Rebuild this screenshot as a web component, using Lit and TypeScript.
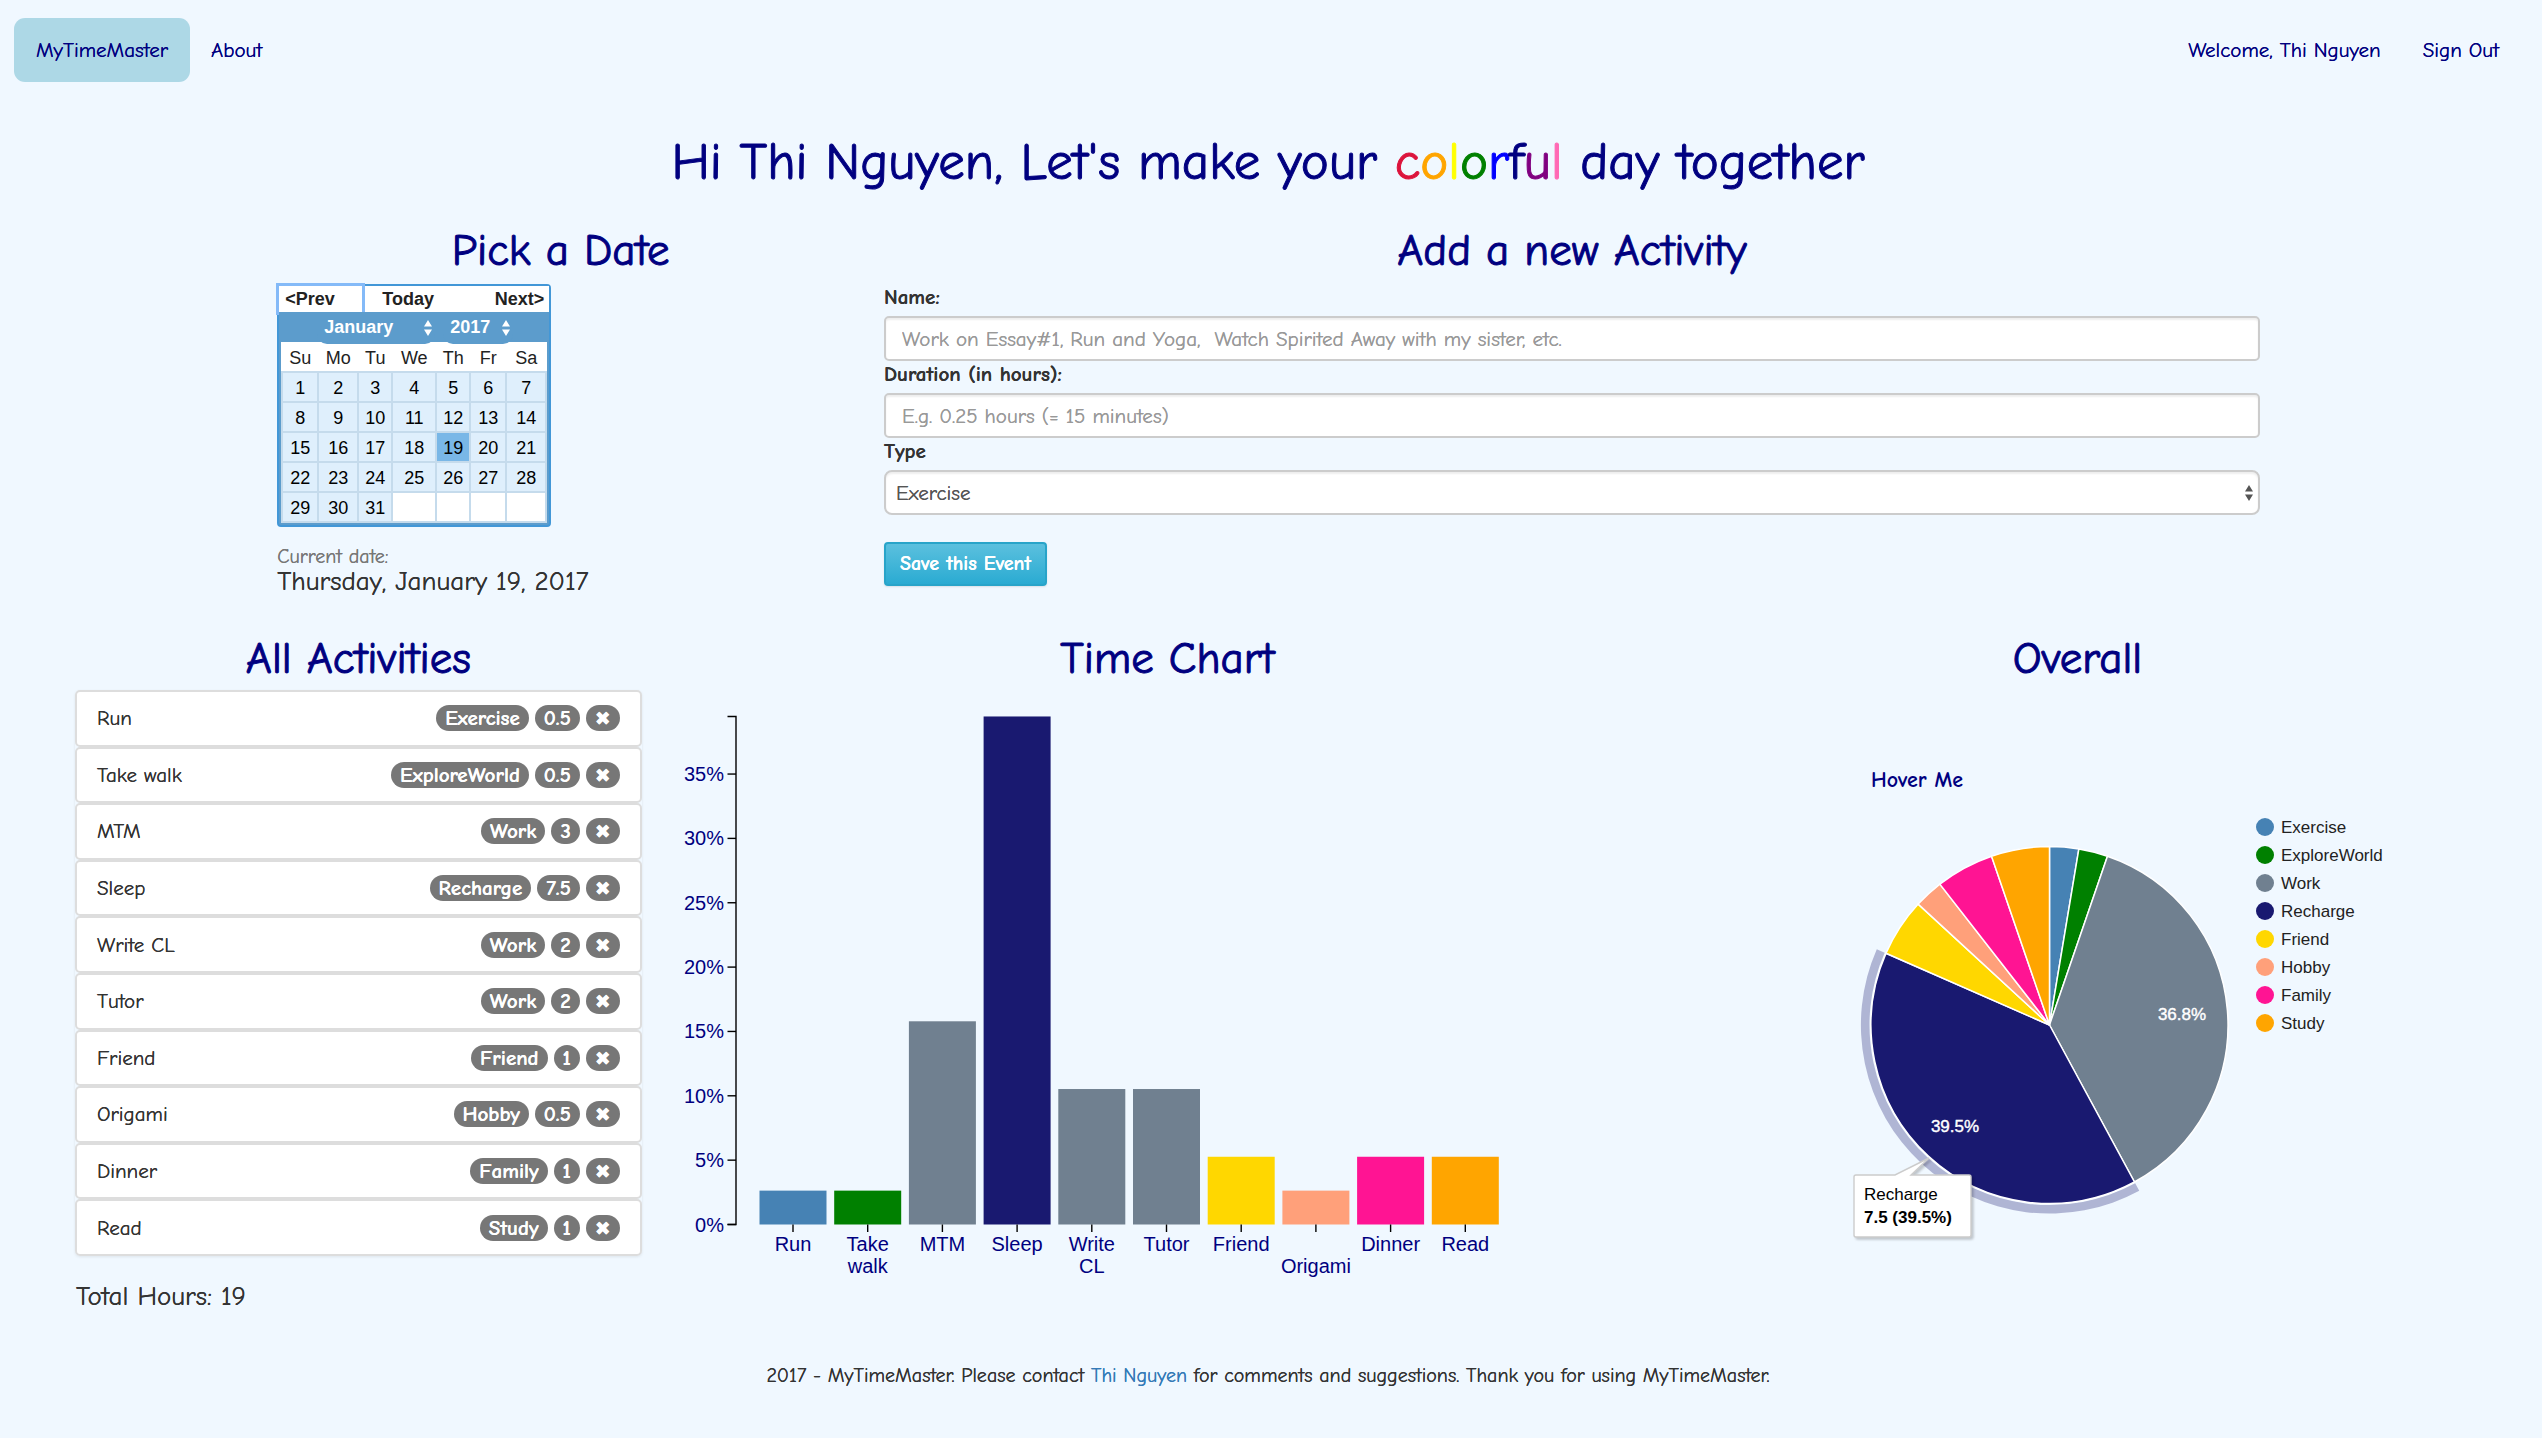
import { LitElement, html, svg, css } from "lit";
import { customElement, state } from "lit/decorators.js";
import { classMap } from "lit/directives/class-map.js";
import { styleMap } from "lit/directives/style-map.js";

interface Activity {
  name: string;
  type: string;
  hours: number;
}

const COLORS: Record<string, string> = {
  Exercise: "steelblue",
  ExploreWorld: "green",
  Work: "slategray",
  Recharge: "midnightblue",
  Friend: "gold",
  Hobby: "lightsalmon",
  Family: "deeppink",
  Study: "orange",
};

const ACTIVITIES: Activity[] = [
  { name: "Run", type: "Exercise", hours: 0.5 },
  { name: "Take walk", type: "ExploreWorld", hours: 0.5 },
  { name: "MTM", type: "Work", hours: 3 },
  { name: "Sleep", type: "Recharge", hours: 7.5 },
  { name: "Write CL", type: "Work", hours: 2 },
  { name: "Tutor", type: "Work", hours: 2 },
  { name: "Friend", type: "Friend", hours: 1 },
  { name: "Origami", type: "Hobby", hours: 0.5 },
  { name: "Dinner", type: "Family", hours: 1 },
  { name: "Read", type: "Study", hours: 1 },
];

const TOTAL = ACTIVITIES.reduce((sum, a) => sum + a.hours, 0);

const RAINBOW: [string, string][] = [
  ["c", "crimson"],
  ["o", "orange"],
  ["l", "yellow"],
  ["o", "green"],
  ["r", "blue"],
  ["f", "navy"],
  ["u", "purple"],
  ["l", "hotpink"],
];

const arrows = html`<svg class="arrows" width="8" height="16" viewBox="0 0 8 16" aria-hidden="true">
  <path d="M4 0 L8 6.5 H0 Z M4 16 L8 9.5 H0 Z" fill="currentColor" />
</svg>`;

const sharedFont = css`
  * {
    box-sizing: border-box;
  }
  button,
  input,
  select {
    font: inherit;
    margin: 0;
    text-shadow: inherit;
  }
`;

@customElement("date-picker")
class DatePicker extends LitElement {
  static styles = [
    sharedFont,
    css`
      :host {
        display: block;
        color: #222;
        font: 18px/26px "Liberation Sans", Arial, sans-serif;
      }
      .box {
        width: 274px;
        border: 2px solid #4297d7;
        border-radius: 4px;
        background: #5c9ccc;
        padding-bottom: 2px;
        text-shadow: none;
      }
      .moves {
        display: flex;
        justify-content: space-between;
        background: #fff;
        height: 26px;
      }
      .moves button {
        border: 0;
        background: #fff;
        padding: 0 5px 0 7px;
        font-weight: bold;
        color: #222;
      }
      .moves .prev {
        position: relative;
        z-index: 1;
        width: 83px;
        padding-left: 6px;
        text-align: left;
        outline: 3px solid #84baf8;
      }
      .moves .today {
        flex: 1;
        text-align: left;
        padding-left: 20px;
      }
      .head {
        position: relative;
        z-index: 2;
        background: #5c9ccc;
        display: flex;
        justify-content: center;
        gap: 8px;
        height: 30px;
        color: #fff;
        padding-left: 2px;
      }
      .pick {
        position: relative;
        display: flex;
        align-items: center;
        height: 32px;
        border-radius: 0 0 10px 10px;
        background: #5c9ccc;
      }
      .pick select {
        appearance: none;
        border: 0;
        background: none;
        color: #fff;
        font-weight: bold;
        height: 32px;
        padding: 0 0 2px 7px;
      }
      .month {
        width: 118px;
      }
      .year {
        width: 70px;
      }
      .month select,
      .year select {
        width: 100%;
      }
      .pick .arrows {
        position: absolute;
        right: 3px;
        top: 8px;
        pointer-events: none;
      }
      table {
        table-layout: fixed;
        border-collapse: collapse;
        width: 266px;
        margin: 0 2px;
        background: #fff;
      }
      th {
        height: 30px;
        padding: 2px 0 0;
        font-weight: normal;
      }
      td {
        height: 30px;
        padding: 0;
        border: 2px solid #c5dbec;
        text-align: center;
      }
      td button {
        display: block;
        width: 100%;
        height: 28px;
        border: 0;
        padding: 1px 0 0;
        background: #dfeffc;
        color: #000;
      }
      td .on {
        background: #79b7e7;
      }
      .w34 { width: 34px; }
      .w36 { width: 36px; }
      .w40 { width: 40px; }
      .w44 { width: 44px; }
    `,
  ];

  @state() private day = 19;

  render() {
    const names = ["Su", "Mo", "Tu", "We", "Th", "Fr", "Sa"];
    const widths = [36, 40, 34, 44, 34, 36, 40];
    return html`<div class="box">
      <div class="moves">
        <button class="prev">&lt;Prev</button>
        <button class="today">Today</button>
        <button>Next&gt;</button>
      </div>
      <div class="head">
        <div class="pick month">
          <select aria-label="Month"><option>January</option></select>${arrows}
        </div>
        <div class="pick year">
          <select aria-label="Year"><option>2017</option></select>${arrows}
        </div>
      </div>
      <table>
        <colgroup>${widths.map((w) => html`<col class="w${w}" />`)}</colgroup>
        <thead><tr>${names.map((n) => html`<th scope="col">${n}</th>`)}</tr></thead>
        <tbody>
          ${[0, 1, 2, 3, 4].map(
            (week) => html`<tr>
              ${names.map((_, i) => {
                const d = week * 7 + i + 1;
                return html`<td>
                  ${d <= 31
                    ? html`<button class=${classMap({ on: d === this.day })} @click=${() => (this.day = d)}>${d}</button>`
                    : ""}
                </td>`;
              })}
            </tr>`
          )}
        </tbody>
      </table>
    </div>`;
  }
}

@customElement("activity-form")
class ActivityForm extends LitElement {
  static styles = [
    sharedFont,
    css`
      :host,
      form {
        display: block;
      }
      label {
        display: block;
        font-weight: bold;
        line-height: 26px;
        padding-bottom: 6px;
      }
      input,
      select {
        display: block;
        width: 100%;
        height: 45px;
        border: 2px solid #ccc;
        border-radius: 5px;
        background: #fff;
        color: #555;
        padding: 0 16px;
        box-shadow: inset 0 2px 2px rgba(0, 0, 0, 0.07);
      }
      input::placeholder {
        color: #999;
        opacity: 1;
      }
      .select {
        position: relative;
      }
      select {
        appearance: none;
        border-radius: 8px;
        padding: 0 10px;
      }
      .arrows {
        position: absolute;
        right: 7px;
        top: 15px;
        color: #555;
        pointer-events: none;
      }
      button {
        display: block;
        height: 44px;
        margin-top: 27px;
        padding: 0 14px;
        border: 2px solid #28a4c9;
        border-radius: 4px;
        background: linear-gradient(#5bc0de, #2aabd2);
        box-shadow: 0 1px 2px rgba(0, 0, 0, 0.1);
        color: #fff;
        font-size: 20px;
        font-weight: bold;
      }
    `,
  ];

  render() {
    return html`<form @submit=${(e: Event) => e.preventDefault()}>
      <label for="name">Name:</label>
      <input id="name" placeholder="Work on Essay#1, Run and Yoga,&nbsp; Watch Spirited Away with my sister, etc." />
      <label for="duration">Duration (in hours):</label>
      <input id="duration" placeholder="E.g. 0.25 hours (= 15 minutes)" />
      <label for="type">Type</label>
      <div class="select">
        <select id="type">
          ${Object.keys(COLORS).map((t) => html`<option>${t}</option>`)}
        </select>
        ${arrows}
      </div>
      <button type="submit">Save this Event</button>
    </form>`;
  }
}

@customElement("activity-list")
class ActivityList extends LitElement {
  static styles = [
    sharedFont,
    css`
      :host {
        display: block;
      }
      ul {
        display: grid;
        grid-auto-rows: 1fr;
        min-height: 566px;
        margin: 0;
        padding: 0;
        list-style: none;
        border-radius: 5px;
        box-shadow: 0 1px 3px rgba(0, 0, 0, 0.08);
      }
      li {
        display: flex;
        align-items: center;
        gap: 6px;
        padding: 0 20px;
        border: 2px solid #ddd;
        border-radius: 5px;
        background: #fff;
      }
      .name {
        flex: 1;
      }
      .badge {
        height: 26px;
        padding: 0 9px;
        border: 0;
        border-radius: 13px;
        background: #777;
        color: #fff;
        font-size: 21px;
        font-weight: bold;
        line-height: 26px;
      }
      .remove {
        font: 19px/26px "DejaVu Sans", sans-serif;
      }
      p {
        margin: 26px 0 0 1px;
        font-size: 27px;
        line-height: 30px;
      }
    `,
  ];

  render() {
    return html`<ul>
        ${ACTIVITIES.map(
          (a) => html`<li>
            <span class="name">${a.name}</span>
            <span class="badge">${a.type}</span>
            <span class="badge">${a.hours}</span>
            <button class="badge remove" aria-label="Remove ${a.name}">✖</button>
          </li>`
        )}
      </ul>
      <p>Total Hours: ${TOTAL}</p>`;
  }
}

@customElement("time-chart")
class TimeChart extends LitElement {
  static styles = css`
    :host,
    svg {
      display: block;
    }
    svg {
      max-width: 100%;
      height: auto;
      text-shadow: none;
    }
    text {
      font: 20px "Liberation Sans", Arial, sans-serif;
      fill: navy;
    }
    .axis {
      fill: none;
      stroke: #000;
      stroke-width: 1.4;
    }
  `;

  render() {
    const base = 534.5;
    const scale = 1287;
    const ticks = [0, 5, 10, 15, 20, 25, 30, 35];
    return html`<svg width="830" height="600" viewBox="0 0 830 600" role="img" aria-label="Share of time for each activity">
      <path class="axis" d="M45.5 26.5 H54 V534.5 H45.5" />
      ${ticks.map((t) => {
        const y = base - (t / 100) * scale;
        return svg`<path class="axis" d="M45.5 ${y} H54" />
          <text x="42" y=${y + 7} text-anchor="end">${t}%</text>`;
      })}
      ${ACTIVITIES.map((a, i) => {
        const h = (a.hours / TOTAL) * scale;
        const x = 77.5 + i * 74.7;
        const words = a.name.length > 6 && !a.name.includes(" ") ? ["", a.name] : a.name.split(" ");
        return svg`<rect x=${x} y=${base - h} width="67" height=${h} fill=${COLORS[a.type]} />
          <path class="axis" d="M${x + 33.5} ${base} v7.5" />
          ${words.map((w, n) => svg`<text x=${x + 33.5} y=${561 + n * 22} text-anchor="middle">${w}</text>`)}`;
      })}
    </svg>`;
  }
}

@customElement("overall-chart")
class OverallChart extends LitElement {
  static styles = css`
    :host,
    svg {
      display: block;
    }
    svg {
      max-width: 100%;
      height: auto;
      text-shadow: none;
    }
    text {
      font: 17px "Liberation Sans", Arial, sans-serif;
      fill: #222;
    }
    .title {
      font: bold 22px "Comic Sans MS", "Comic Neue", "Open Sans", sans-serif;
      fill: navy;
    }
    .share {
      fill: #fff;
      stroke: #fff;
      stroke-width: 0.4;
      text-anchor: middle;
    }
    .slice {
      stroke: #fff;
      stroke-width: 1.5;
    }
    .tip {
      fill: #fff;
      stroke: #ccc;
      stroke-width: 1.4;
      filter: drop-shadow(2px 2px 1px rgba(0, 0, 0, 0.2));
    }
    .tip-text {
      fill: #000;
    }
    .value {
      font-weight: bold;
    }
  `;

  render() {
    const r = 178.5;
    const at = (share: number, radius: number) => {
      const a = share * 2 * Math.PI;
      return `${(Math.sin(a) * radius).toFixed(2)} ${(-Math.cos(a) * radius).toFixed(2)}`;
    };
    const types = Object.keys(COLORS);
    let from = 0;
    const slices = types.map((type) => {
      const share = ACTIVITIES.filter((a) => a.type === type).reduce((s, a) => s + a.hours, 0) / TOTAL;
      const slice = { type, from, to: from + share };
      from += share;
      return slice;
    });
    const active = slices[3];
    return html`<svg width="769" height="600" viewBox="-1 0 769 600" role="img" aria-label="Share of time for each type">
      <text class="title" x="177" y="97">Hover Me</text>
      <g transform="translate(355.5 335)">
        <path
          d="M${at(active.from, 180)} A180 180 0 0 1 ${at(active.to, 180)} L${at(active.to, 188.6)} A188.6 188.6 0 0 0 ${at(active.from, 188.6)} Z"
          fill="midnightblue"
          opacity="0.3"
        />
        ${slices.map(
          (s) => svg`<path class="slice" fill=${COLORS[s.type]}
            d="M0 0 L${at(s.from, r)} A${r} ${r} 0 0 1 ${at(s.to, r)} Z" />`
        )}
      </g>
      <text class="share" x="488" y="330">36.8%</text>
      <text class="share" x="261" y="442">39.5%</text>
      ${types.map(
        (t, i) => svg`<circle cx="571" cy=${137 + i * 28} r="9" fill=${COLORS[t]} />
          <text x="587" y=${143 + i * 28}>${t}</text>`
      )}
      <path class="tip" d="M162 485 H201 L235 468 L217 485 H275 Q277 485 277 487 V545 Q277 547 275 547 H162 Q160 547 160 545 V487 Q160 485 162 485 Z" />
      <text class="tip-text" x="170" y="510">Recharge</text>
      <text class="tip-text value" x="170" y="533">7.5 (39.5%)</text>
    </svg>`;
  }
}

@customElement("app-root")
class AppRoot extends LitElement {
  static styles = [
    sharedFont,
    css`
      :host {
        display: block;
        min-height: 100vh;
        background: aliceblue;
        color: #333;
        font: 21px/30px "Comic Sans MS", "Comic Neue", "Open Sans", sans-serif;
        text-shadow: 0 0 0;
      }
      a {
        color: #337ab7;
        text-decoration: none;
      }
      nav {
        display: flex;
        align-items: center;
        padding: 18px 22px 0 14px;
      }
      nav a {
        padding: 0 21px;
        color: navy;
        line-height: 64px;
      }
      nav .brand {
        padding: 0 22px;
        border-radius: 11px;
        background: lightblue;
      }
      .user {
        margin-left: auto;
      }
      h1,
      h2 {
        margin: 0;
        color: navy;
        font-weight: normal;
        text-align: center;
        text-shadow: none;
        -webkit-text-stroke: 1px;
      }
      h1 {
        margin-top: 50px;
        padding-right: 6px;
        font-size: 53px;
        line-height: 60px;
      }
      h2 {
        padding-bottom: 8px;
        font-size: 45px;
        line-height: 52px;
      }
      .grid {
        display: grid;
        grid-template-columns: repeat(12, minmax(0, 1fr));
        column-gap: 40px;
        padding: 32px 80px 0 75px;
      }
      .grid + .grid {
        padding-top: 37px;
      }
      .grid + .grid h2 {
        padding-bottom: 6px;
      }
      .date {
        grid-column: 2 / span 3;
      }
      .form {
        grid-column: 5 / span 7;
      }
      .list {
        grid-column: span 3;
      }
      .time {
        grid-column: span 5;
      }
      .overall {
        grid-column: span 4;
      }
      .caption {
        margin-top: 18px;
        color: #777;
        font-size: 20px;
        line-height: 24px;
      }
      .current {
        font-size: 27px;
        line-height: 26px;
      }
      footer {
        margin-top: 49px;
        padding: 0 6px 47px 0;
        font-size: 20px;
        text-align: center;
      }
    `,
  ];

  render() {
    return html`
      <nav>
        <a class="brand" href="#home">MyTimeMaster</a>
        <a href="#about">About</a>
        <a class="user" href="#account">Welcome, Thi Nguyen</a>
        <a href="#signout">Sign Out</a>
      </nav>
      <main>
        <h1>
          Hi Thi Nguyen, Let's make your
          ${RAINBOW.map(([ch, color]) => html`<span style=${styleMap({ color })}>${ch}</span>`)}
          day together
        </h1>
        <div class="grid">
          <section class="date">
            <h2>Pick a Date</h2>
            <date-picker></date-picker>
            <div class="caption">Current date:</div>
            <div class="current">Thursday, January 19, 2017</div>
          </section>
          <section class="form">
            <h2>Add a new Activity</h2>
            <activity-form></activity-form>
          </section>
        </div>
        <div class="grid">
          <section class="list">
            <h2>All Activities</h2>
            <activity-list></activity-list>
          </section>
          <section class="time">
            <h2>Time Chart</h2>
            <time-chart></time-chart>
          </section>
          <section class="overall">
            <h2>Overall</h2>
            <overall-chart></overall-chart>
          </section>
        </div>
      </main>
      <footer>
        2017 - MyTimeMaster. Please contact <a href="#contact">Thi Nguyen</a> for comments and suggestions. Thank you
        for using MyTimeMaster.
      </footer>
    `;
  }
}
